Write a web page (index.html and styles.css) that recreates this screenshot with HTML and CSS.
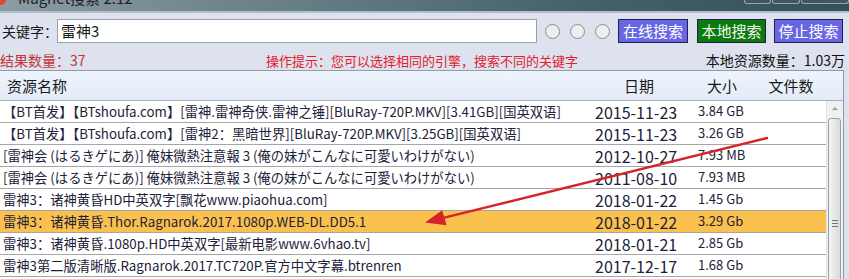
FILE: index.html
```html
<!DOCTYPE html>
<html>
<head>
<meta charset="utf-8">
<link rel="stylesheet" href="styles.css">
</head>
<body>
<div class="titlebar">
  <span class="title-icon"></span>
  <span class="title-text">Magnet搜索 2.12</span>
  <span class="win-ctrls"><i></i><i></i><i></i></span>
</div>
<div class="toolbar">
  <span class="label">关键字：</span>
  <div class="input">雷神3</div>
  <span class="radio r1"></span>
  <span class="radio r2"></span>
  <span class="radio r2"></span>
  <span class="btn blue b1">在线搜索</span>
  <span class="btn green b2">本地搜索</span>
  <span class="btn blue b3">停止搜索</span>
</div>
<div class="infobar">
  <span class="count">结果数量：37</span>
  <span class="hint">操作提示：您可以选择相同的引擎，搜索不同的关键字</span>
  <span class="local">本地资源数量：1.03万</span>
</div>
<div class="list">
  <div class="header">
    <span class="h-name">资源名称</span>
    <span class="h-c">日期</span>
    <span class="h-c">大小</span>
    <span class="h-c">文件数</span>
    <span class="h-sb"></span>
  </div>
  <div class="body">
    <div class="rows">
      <div class="row"><span class="name">【BT首发】【BTshoufa.com】[雷神.雷神奇侠.雷神之锤][BluRay-720P.MKV][3.41GB][国英双语]</span><span class="date">2015-11-23</span><span class="size">3.84 GB</span><span></span></div>
      <div class="row"><span class="name">【BT首发】【BTshoufa.com】[雷神2：黑暗世界][BluRay-720P.MKV][3.25GB][国英双语]</span><span class="date">2015-11-23</span><span class="size">3.26 GB</span><span></span></div>
      <div class="row"><span class="name">[雷神会 (はるきゲにあ)] 俺妹微熱注意報 3 (俺の妹がこんなに可愛いわけがない)</span><span class="date">2012-10-27</span><span class="size">7.93 MB</span><span></span></div>
      <div class="row"><span class="name">[雷神会 (はるきゲにあ)] 俺妹微熱注意報 3 (俺の妹がこんなに可愛いわけがない)</span><span class="date">2011-08-10</span><span class="size">7.93 MB</span><span></span></div>
      <div class="row"><span class="name">雷神3：诸神黄昏HD中英双字[飘花www.piaohua.com]</span><span class="date">2018-01-22</span><span class="size">1.45 Gb</span><span></span></div>
      <div class="row sel"><span class="name">雷神3：诸神黄昏.Thor.Ragnarok.2017.1080p.WEB-DL.DD5.1</span><span class="date">2018-01-22</span><span class="size">3.29 Gb</span><span></span></div>
      <div class="row"><span class="name">雷神3：诸神黄昏.1080p.HD中英双字[最新电影www.6vhao.tv]</span><span class="date">2018-01-21</span><span class="size">2.85 Gb</span><span></span></div>
      <div class="row"><span class="name">雷神3第二版清晰版.Ragnarok.2017.TC720P.官方中文字幕.btrenren</span><span class="date">2017-12-17</span><span class="size">1.68 Gb</span><span></span></div>
      <div class="row"><span class="name"></span><span class="date"></span><span class="size"></span><span></span></div>
    </div>
    <div class="scrollbar">
      <span class="sb-up"></span>
      <div class="thumb"><span class="grip"></span></div>
    </div>
  </div>
</div>
<svg class="arrow" width="849" height="279" viewBox="0 0 849 279">
  <line x1="767" y1="138" x2="444.4" y2="217.7" stroke="#d8222a" stroke-width="2.4" stroke-linecap="round"/>
  <polygon points="425,222.5 446.6,225.2 442.2,210.2" fill="#d8222a"/>
</svg>
</body>
</html>
```
FILE: styles.css
```css
html, body {
  margin: 0;
  padding: 0;
}
body {
  width: 849px;
  height: 279px;
  overflow: hidden;
  position: relative;
  background: #dde2ee;
  font-family: "Noto Sans CJK SC", "Microsoft YaHei", sans-serif;
  color: #1a1a1a;
}
.titlebar {
  height: 11px;
  display: flex;
  overflow: hidden;
  background: linear-gradient(90deg, #8c9ca2 0%, #667e86 35%, #45606a 70%, #34505a 100%);
  border-bottom: 2px solid #b3bdca;
}
.title-icon {
  width: 10px;
  height: 10px;
  border-radius: 50%;
  background: #e04a2c;
  margin-top: -5px;
  margin-left: -4px;
  flex: none;
}
.title-text {
  font-size: 15px;
  line-height: 15px;
  margin-top: -10px;
  margin-left: 12px;
  color: #1c2226;
  flex: none;
}
.win-ctrls {
  margin-left: auto;
  display: flex;
  height: 5px;
  margin-top: -1px;
}
.win-ctrls i {
  display: block;
  border: 1px solid #9aa6ae;
  border-top: none;
  border-radius: 0 0 3px 3px;
  background: #3e5860;
}
.win-ctrls i:nth-child(1) { width: 25px; }
.win-ctrls i:nth-child(2) { width: 26px; margin-left: 1px; }
.win-ctrls i:nth-child(3) { width: 46px; margin-left: 1px; }

.toolbar {
  display: flex;
  align-items: center;
  height: 24px;
  margin-top: 6px;
  padding-left: 2px;
}
.label {
  width: 55px;
  font-size: 14px;
  line-height: 24px;
  white-space: nowrap;
  flex: none;
}
.input {
  width: 480px;
  height: 24px;
  box-sizing: border-box;
  border: 1px solid #9da1a8;
  background: #fff;
  font-size: 15px;
  line-height: 22px;
  padding-left: 3px;
  flex: none;
}
.radio {
  width: 15px;
  height: 15px;
  box-sizing: border-box;
  border: 1px solid #8c8c8c;
  border-radius: 50%;
  background: #eeeef0;
  flex: none;
}
.r1 { margin-left: 8px; }
.r2 { margin-left: 10px; }
.btn {
  height: 24px;
  box-sizing: border-box;
  border: 1px solid #20204a;
  font-size: 15px;
  line-height: 22px;
  text-align: center;
  color: #fff;
  flex: none;
  white-space: nowrap;
}
.blue { background: #6767e6; }
.green { background: #0c7a0e; color: #f0f6ee; }
.b1 { width: 70px; margin-left: 8px; }
.b2 { width: 69px; margin-left: 9px; }
.b3 { width: 69px; margin-left: 8px; }

.infobar {
  display: flex;
  align-items: center;
  height: 20px;
  margin-top: 7px;
  white-space: nowrap;
}
.count {
  width: 266px;
  font-size: 14px;
  color: #c4343a;
  flex: none;
}
.hint {
  font-size: 13px;
  color: #e2202c;
}
.local {
  margin-left: auto;
  padding-right: 4px;
  font-size: 14px;
  color: #111;
}

.list {
  width: 844px;
  box-sizing: border-box;
  border-top: 1px solid #929aa8;
  border-right: 1px solid #929aa8;
  background: #fff;
}
.header {
  display: grid;
  grid-template-columns: 590px 98px 68px 70px 1fr;
  height: 29px;
  border-bottom: 1px solid #a9b0bb;
  background: linear-gradient(#eef4fc, #e3ecf8);
  font-size: 15px;
  line-height: 29px;
  color: #1a1a1a;
}
.h-name { padding-left: 7px; }
.h-c { text-align: center; }

.body {
  display: flex;
  height: 180px;
  overflow: hidden;
}
.rows {
  width: 826px;
  flex: none;
}
.row {
  display: grid;
  grid-template-columns: 590px 98px 68px 70px;
  height: 21px;
  border-bottom: 1px solid #a6a6a6;
  line-height: 21px;
  color: #1c2238;
  white-space: nowrap;
  overflow: hidden;
}
.row.sel { background: #fbc14e; }
.name {
  font-size: 13.3px;
  padding-left: 3px;
  overflow: hidden;
}
.date {
  font-size: 16px;
  padding-left: 5px;
  line-height: 23px;
}
.size {
  font-size: 13px;
  padding-left: 10px;
  line-height: 19px;
}
.scrollbar {
  flex: 1;
  background: #eff0f2;
  border-left: 1px solid #e0e3e7;
  position: relative;
}
.sb-up {
  display: block;
  width: 0;
  height: 0;
  margin: 6px auto 0;
  border-left: 3px solid transparent;
  border-right: 3px solid transparent;
  border-bottom: 3px solid #9aa0a8;
}
.thumb {
  width: 13px;
  height: 200px;
  box-sizing: border-box;
  margin: 8px 0 0 1px;
  border: 1px solid #9a9fa6;
  border-radius: 3px;
  background: linear-gradient(90deg, #f4f4f4, #dcdcdc);
  padding-top: 101px;
}
.grip {
  display: block;
  width: 6px;
  height: 5px;
  margin: 0 auto;
  border-top: 1px solid #70757c;
  border-bottom: 1px solid #70757c;
  background: linear-gradient(transparent 2px, #70757c 2px, #70757c 3px, transparent 3px);
}
.arrow {
  position: absolute;
  left: 0;
  top: 0;
  pointer-events: none;
}
```
